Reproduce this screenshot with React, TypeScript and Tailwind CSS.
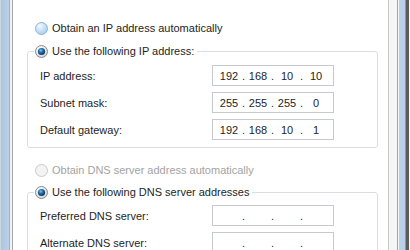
import React from "react";

type RadioKind = "hover" | "checked" | "disabled";

function Radio({ kind }: { kind: RadioKind }) {
  const id = `g-${kind}`;
  return (
    <svg width="13" height="13" viewBox="0 0 13 13" className="shrink-0">
      <defs>
        <radialGradient id={`${id}-a`} cx="35%" cy="30%" r="75%">
          <stop offset="0%" stopColor="#f4faff" />
          <stop offset="100%" stopColor="#a3cdee" />
        </radialGradient>
        <radialGradient id={`${id}-b`} cx="35%" cy="30%" r="75%">
          <stop offset="0%" stopColor="#ffffff" />
          <stop offset="100%" stopColor="#d4d4d4" />
        </radialGradient>
        <radialGradient id={`${id}-c`} cx="40%" cy="35%" r="70%">
          <stop offset="0%" stopColor="#7cc8f4" />
          <stop offset="45%" stopColor="#1d6aa6" />
          <stop offset="100%" stopColor="#0b2f55" />
        </radialGradient>
      </defs>
      {kind === "hover" && (
        <circle cx="6.5" cy="6.5" r="6" fill={`url(#${id}-a)`} stroke="#8fb3d3" strokeWidth="1" />
      )}
      {kind === "checked" && (
        <>
          <circle cx="6.5" cy="6.5" r="6" fill={`url(#${id}-b)`} stroke="#8a8a8a" strokeWidth="1" />
          <circle cx="6.5" cy="6.5" r="3.6" fill={`url(#${id}-c)`} />
        </>
      )}
      {kind === "disabled" && (
        <circle cx="6.5" cy="6.5" r="6" fill="#f3f3f3" stroke="#c9c9c9" strokeWidth="1" />
      )}
    </svg>
  );
}

function IpBox({ parts }: { parts: string[] }) {
  return (
    <div className="flex h-[21px] w-[122px] shrink-0 items-center border border-[#c6cacf] bg-white pl-[3px] text-[11px] text-[#1e1e1e]">
      {parts.map((p, i) => (
        <React.Fragment key={i}>
          <span className="w-[26px] text-center">{p}</span>
          {i < 3 && <span className="w-[3px] text-center">.</span>}
        </React.Fragment>
      ))}
    </div>
  );
}

function Row({ label, parts }: { label: string; parts: string[] }) {
  return (
    <div className="flex h-[27px] items-center pl-[12px]">
      <span className="w-[172px] shrink-0 text-[11px] text-[#1e1e1e]">{label}</span>
      <IpBox parts={parts} />
    </div>
  );
}

export default function App() {
  const empty = ["", "", "", ""];
  return (
    <div
      className="flex h-[250px] w-[410px] overflow-hidden bg-white"
      style={{ fontFamily: '"Liberation Sans", Arial, sans-serif' }}
    >
      {/* left window frame */}
      <div className="w-[1px] shrink-0 bg-[#ccd6e1]" />
      <div className="w-[8px] shrink-0 bg-gradient-to-r from-[#adc5e1] to-[#bcd1e9]" />
      <div className="w-[1px] shrink-0 bg-[#9fb0c4]" />
      <div className="w-[2px] shrink-0 bg-[#eef1f5]" />
      <div className="w-[1px] shrink-0 bg-[#a8a8a8]" />

      {/* content */}
      <div className="flex w-[375px] shrink-0 flex-col pt-[20px] leading-[16px]">
        <div className="flex h-[16px] items-center gap-[4px] pl-[22px]">
          <Radio kind="hover" />
          <span className="text-[11px] text-[#1e1e1e]">Obtain an IP address automatically</span>
        </div>

        <fieldset className="ml-[14px] mr-[10px] mt-[7px] rounded-[3px] border border-[#dadee3] pb-[4px] pt-[3px]">
          <legend className="ml-[6px] px-[1px]">
            <div className="flex h-[16px] items-center gap-[4px] pr-[2px]">
              <Radio kind="checked" />
              <span className="text-[11px] text-[#1e1e1e]">Use the following IP address:</span>
            </div>
          </legend>
          <Row label="IP address:" parts={["192", "168", "10", "10"]} />
          <Row label="Subnet mask:" parts={["255", "255", "255", "0"]} />
          <Row label="Default gateway:" parts={["192", "168", "10", "1"]} />
        </fieldset>

        <div className="mt-[14px] flex h-[16px] items-center gap-[4px] pl-[22px]">
          <Radio kind="disabled" />
          <span className="text-[11px] text-[#a3a3a3]">Obtain DNS server address automatically</span>
        </div>

        <fieldset className="ml-[14px] mr-[10px] mt-[6px] rounded-[3px] border border-[#dadee3] pb-[4px] pt-[2px]">
          <legend className="ml-[6px] px-[1px]">
            <div className="flex h-[16px] items-center gap-[4px] pr-[2px]">
              <Radio kind="checked" />
              <span className="text-[11px] text-[#1e1e1e]">Use the following DNS server addresses</span>
            </div>
          </legend>
          <Row label="Preferred DNS server:" parts={empty} />
          <Row label="Alternate DNS server:" parts={empty} />
        </fieldset>
      </div>

      {/* right window frame */}
      <div className="w-[1px] shrink-0 bg-[#c9c9c9]" />
      <div className="w-[8px] shrink-0 bg-[#f5f5f5]" />
      <div className="w-[1px] shrink-0 bg-[#a3a3a3]" />
      <div className="w-[1px] shrink-0 bg-[#f4f6f9]" />
      <div className="w-[6px] shrink-0 bg-[#b9d0ea]" />
      <div className="w-[1px] shrink-0 bg-[#8a96a4]" />
      <div className="w-[3px] shrink-0 bg-[#5c5c5c]" />
    </div>
  );
}
